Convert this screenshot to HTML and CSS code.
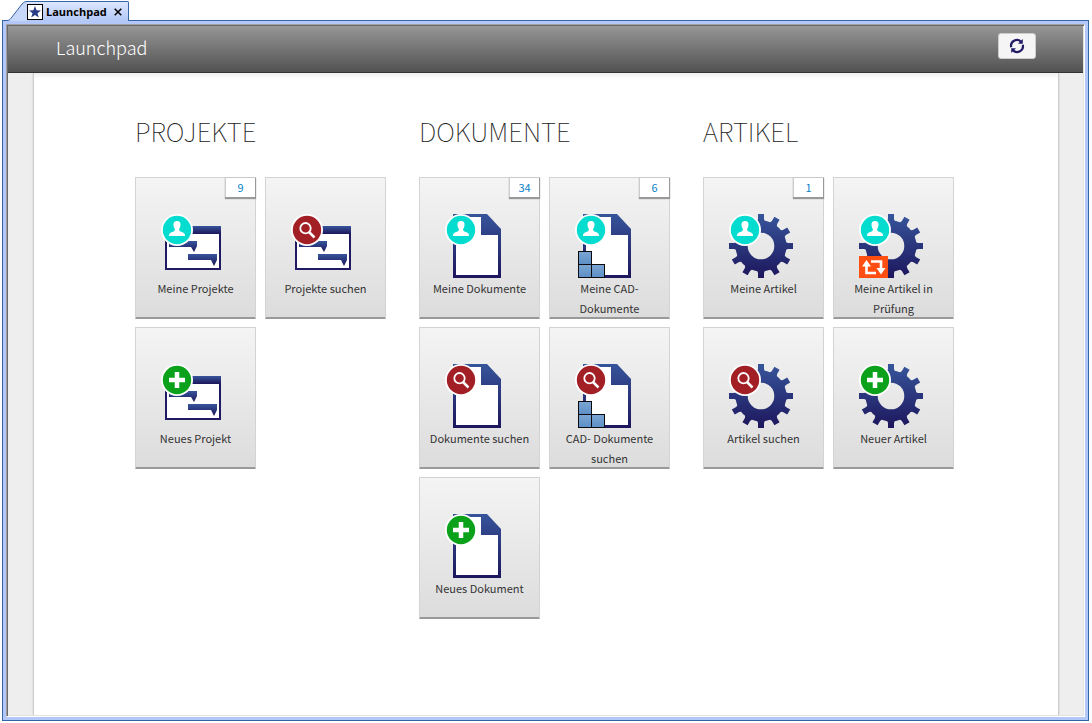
FILE: index.html
```html
<!DOCTYPE html>
<html lang="de">
<head>
<meta charset="utf-8">
<title>Launchpad</title>
<link rel="stylesheet" href="styles.css">
</head>
<body>
<svg class="sprite" aria-hidden="true">
  <defs>
    <linearGradient id="navy" gradientUnits="userSpaceOnUse" x1="0" y1="0" x2="0" y2="64">
      <stop offset="0" stop-color="#37559b"/><stop offset="1" stop-color="#1d165c"/>
    </linearGradient>
    <linearGradient id="bar" x1="0" y1="0" x2="0" y2="1">
      <stop offset="0" stop-color="#37559b"/><stop offset="1" stop-color="#1d165c"/>
    </linearGradient>
    <linearGradient id="block" x1="0" y1="0" x2="0" y2="1">
      <stop offset="0" stop-color="#7ba6d3"/><stop offset="1" stop-color="#5d8fc6"/>
    </linearGradient>
    <g id="window">
      <rect x="4" y="12" width="56" height="44" fill="#1f1a62"/>
      <rect x="6" y="20" width="52" height="34" fill="#fff"/>
      <rect x="4" y="12" width="56" height="8" fill="url(#bar)"/>
      <path d="M8 27H36V32L33 38L30 33H8Z" fill="url(#bar)"/>
      <path d="M27 40H56V46L53 52L50 46H27Z" fill="url(#bar)"/>
    </g>
    <g id="doc">
      <path d="M8 0H42L56 15V64H8Z" fill="url(#navy)"/>
      <path d="M11 3H36V21H53V61H11Z" fill="#fff"/>
    </g>
    <g id="blocks" fill="url(#block)" stroke="#0b0b0f">
      <rect x="4.500" y="37.500" width="13" height="13"/>
      <rect x="4.500" y="50.500" width="13" height="13"/>
      <rect x="17.500" y="50.500" width="13" height="13"/>
    </g>
    <path id="tooth" d="M27 10L29 5V0H35V5L37 10Z"/>
    <g id="gear">
      <mask id="gearmask" maskUnits="userSpaceOnUse" x="0" y="0" width="64" height="64">
        <g fill="#fff">
          <circle cx="32" cy="32" r="25.500"/>
          <use href="#tooth"/><use href="#tooth" transform="rotate(30 32 32)"/>
          <use href="#tooth" transform="rotate(60 32 32)"/><use href="#tooth" transform="rotate(90 32 32)"/>
          <use href="#tooth" transform="rotate(120 32 32)"/><use href="#tooth" transform="rotate(150 32 32)"/>
          <use href="#tooth" transform="rotate(180 32 32)"/><use href="#tooth" transform="rotate(210 32 32)"/>
          <use href="#tooth" transform="rotate(240 32 32)"/><use href="#tooth" transform="rotate(270 32 32)"/>
          <use href="#tooth" transform="rotate(300 32 32)"/><use href="#tooth" transform="rotate(330 32 32)"/>
        </g>
        <circle cx="32" cy="32" r="13.300" fill="#000"/>
      </mask>
      <rect width="64" height="64" fill="url(#navy)" mask="url(#gearmask)"/>
    </g>
    <g id="review">
      <rect x="0" y="42" width="29" height="22" fill="#ff4e12"/>
      <g fill="none" stroke="#fff" stroke-width="2.600">
        <path d="M7.500 50V59H17"/><path d="M12 47.500H22V56"/>
      </g>
      <path d="M3 52.500L7.500 46L12 52.500Z M17.500 54H26.500L22 60.500Z" fill="#fff"/>
    </g>
    <g id="mine">
      <circle cx="16" cy="16" r="16" fill="#fff"/><circle cx="16" cy="16" r="14.200" fill="#04dccf"/>
      <path d="M16 7C18.500 7 19.700 8.500 19.500 11C19.400 13 18.700 14 18.200 15C18 16.500 18.300 17 19.500 17.400C22.500 18.200 24 19 24 21.500V22H8V21.500C8 19 9.500 18.200 12.500 17.400C13.700 17 14 16.500 13.800 15C13.300 14 12.600 13 12.500 11C12.300 8.500 13.500 7 16 7Z" fill="#fff"/>
    </g>
    <g id="search">
      <circle cx="16" cy="16" r="16" fill="#fff"/><circle cx="16" cy="16" r="14.200" fill="#a31f26"/>
      <circle cx="14.500" cy="14.200" r="5.200" fill="none" stroke="#fff" stroke-width="1.800"/>
      <path d="M18 18L23.500 23.500" stroke="#fff" stroke-width="2.500"/>
    </g>
    <g id="new">
      <circle cx="16" cy="16" r="16" fill="#fff"/><circle cx="16" cy="16" r="14.200" fill="#0ba11b"/>
      <path d="M16 8V24M8 16H24" stroke="#fff" stroke-width="4.500"/>
    </g>
  </defs>
</svg>

<div class="tabs">
  <svg class="tab-slope" viewBox="0 0 20 20" aria-hidden="true">
    <path class="slope-fill" d="M0 20C3 19 3 18 5 16L15 3C17 1 18 .5 20 .5V20Z"/>
    <path class="slope-line" d="M0 19.500C3 19.500 3 18 5 16L15 3C17 1 18 .5 20 .5"/>
  </svg>
  <div class="tab">
    <svg class="tab-icon" viewBox="0 0 16 16" aria-hidden="true">
      <rect x=".5" y=".5" width="15" height="15" fill="#fff" stroke="#000"/>
      <path d="M8 2L9.600 6.300L14 6.500L10.500 9.200L11.800 13.600L8 11L4.200 13.600L5.500 9.200L2 6.500L6.400 6.300Z" fill="#2b3c86"/>
    </svg>
    <span>Launchpad</span>
    <button class="tab-close" type="button" aria-label="Schließen">
      <svg viewBox="0 0 8 8"><path d="M.7 .7L7.300 7.300M7.300 .7L.7 7.300" stroke="#000" stroke-width="1.500"/></svg>
    </button>
  </div>
</div>

<div class="frame">
  <div class="view">
    <header class="header">
      <h1>Launchpad</h1>
      <button class="refresh" type="button" aria-label="Aktualisieren">
        <svg viewBox="0 0 16 16">
          <path d="M2.200 9.200A5.900 5.900 0 0 1 12 3.600M13.800 6.800A5.900 5.900 0 0 1 4 12.400" fill="none" stroke="#221b66" stroke-width="2.200"/>
          <path d="M13.800 1V5.800H9Z M2.200 15V10.200H7Z" fill="#221b66"/>
        </svg>
      </button>
    </header>
    <main class="sheet">
      <section class="group">
        <h2>PROJEKTE</h2>
        <div class="tiles">
          <button class="tile" type="button"><span class="count">9</span><svg class="icon" viewBox="0 0 69 64"><use href="#window"/><use href="#mine"/></svg><span class="label">Meine Projekte</span></button>
          <button class="tile" type="button"><svg class="icon" viewBox="0 0 69 64"><use href="#window"/><use href="#search"/></svg><span class="label">Projekte suchen</span></button>
          <button class="tile" type="button"><svg class="icon" viewBox="0 0 69 64"><use href="#window"/><use href="#new"/></svg><span class="label">Neues Projekt</span></button>
        </div>
      </section>
      <section class="group">
        <h2>DOKUMENTE</h2>
        <div class="tiles">
          <button class="tile" type="button"><span class="count">34</span><svg class="icon" viewBox="0 0 69 64"><use href="#doc"/><use href="#mine"/></svg><span class="label">Meine Dokumente</span></button>
          <button class="tile" type="button"><span class="count">6</span><svg class="icon" viewBox="0 0 69 64"><use href="#doc"/><use href="#mine"/><use href="#blocks" x="-1"/></svg><span class="label">Meine CAD-<br>Dokumente</span></button>
          <button class="tile" type="button"><svg class="icon" viewBox="0 0 69 64"><use href="#doc"/><use href="#search"/></svg><span class="label">Dokumente suchen</span></button>
          <button class="tile" type="button"><svg class="icon" viewBox="0 0 69 64"><use href="#doc"/><use href="#search"/><use href="#blocks" x="-1"/></svg><span class="label">CAD- Dokumente<br>suchen</span></button>
          <button class="tile" type="button"><svg class="icon" viewBox="0 0 69 64"><use href="#doc"/><use href="#new"/></svg><span class="label">Neues Dokument</span></button>
        </div>
      </section>
      <section class="group">
        <h2>ARTIKEL</h2>
        <div class="tiles">
          <button class="tile" type="button"><span class="count">1</span><svg class="icon" viewBox="0 0 69 64"><use href="#gear"/><use href="#mine"/></svg><span class="label">Meine Artikel</span></button>
          <button class="tile" type="button"><svg class="icon" viewBox="0 0 69 64"><use href="#gear"/><use href="#mine"/><use href="#review"/></svg><span class="label">Meine Artikel in<br>Prüfung</span></button>
          <button class="tile" type="button"><svg class="icon" viewBox="0 0 69 64"><use href="#gear"/><use href="#search"/></svg><span class="label">Artikel suchen</span></button>
          <button class="tile" type="button"><svg class="icon" viewBox="0 0 69 64"><use href="#gear"/><use href="#new"/></svg><span class="label">Neuer Artikel</span></button>
        </div>
      </section>
    </main>
  </div>
</div>
</body>
</html>
```
FILE: styles.css
```css
* { box-sizing: border-box; }
body {
  margin: 0;
  min-height: 100vh;
  padding: 1px 3px 2px 2px;
  display: flex;
  flex-direction: column;
  background: #fff;
  font-family: "Noto Sans CJK SC", "Open Sans", sans-serif;
}
button { font: inherit; color: inherit; padding: 0; cursor: pointer; }
svg { display: block; }
.sprite { position: absolute; width: 0; height: 0; }

.tabs { display: flex; height: 20px; padding-left: 5px; position: relative; z-index: 1; }
.tab-slope { width: 20px; height: 20px; }
.slope-fill { fill: #c8d8fb; }
.slope-line { fill: none; stroke: #3565a5; }
.tab {
  display: flex;
  align-items: center;
  gap: 3px;
  padding-right: 6px;
  border: solid #3565a5;
  border-width: 1px 1px 0 0;
  border-radius: 0 2px 0 0;
  background: linear-gradient(#dde7fd, #b3c8f8);
  font: bold 11px/16px "Open Sans", sans-serif;
  color: #000;
}
.tab-icon { width: 16px; height: 16px; }
.tab-close { width: 8px; height: 8px; margin-left: 4px; border: 0; background: none; }
.tab-close svg { width: 8px; height: 8px; }

.frame {
  flex: 1;
  display: flex;
  margin-top: -1px;
  padding: 3px;
  border: 1px solid #3565a5;
  background: #b3c8f8;
}
.view {
  flex: 1;
  display: flex;
  flex-direction: column;
  border: 1px solid;
  border-color: #a0a0a0 #fff #fff #a0a0a0;
  box-shadow: inset 1px 1px #696969, inset -1px -1px #e3e3e3;
  padding: 1px;
  background: #eee;
}
.header {
  display: flex;
  align-items: center;
  justify-content: space-between;
  height: 47px;
  padding: 0 47px 4px 48px;
  border-bottom: 1px solid #333;
  background: linear-gradient(#969696, #525252);
}
.header h1 { margin: 0; font-size: 18px; font-weight: 300; line-height: 24px; color: #fff; }
.refresh {
  display: flex;
  align-items: center;
  justify-content: center;
  width: 38px;
  height: 26px;
  margin-bottom: 2px;
  border: 1px solid #ccc;
  border-radius: 3px;
  background: #f5f5f5;
}
.refresh svg { width: 16px; height: 16px; }
.sheet {
  flex: 1;
  display: flex;
  flex-wrap: wrap;
  align-content: flex-start;
  gap: 33px;
  margin: 0 24px 0 25px;
  padding: 38px 101px;
  border: solid #ccc;
  border-width: 0 1px;
  background: linear-gradient(#f0f0f0, #fff 6px);
  box-shadow: 0 0 2px #ccc;
  clip-path: inset(0 -3px);
}
.group { width: 251px; }
.group h2 { margin: 0 0 26px; font-size: 26px; font-weight: 100; line-height: 40px; color: #222; }
.tiles { display: grid; grid-template-columns: repeat(2, 121px); gap: 8px 9px; }
.tile {
  position: relative;
  display: flex;
  flex-direction: column;
  align-items: center;
  justify-content: flex-start;
  min-height: 142px;
  padding-top: 36px;
  border: 1px solid #d3d3d3;
  border-bottom-color: #999;
  background: linear-gradient(#f4f4f4, #dcdcdc);
  box-shadow: inset 0 -1px #999;
}
.icon { width: 69px; height: 64px; }
.label { font-size: 11px; line-height: 20px; color: #333; white-space: nowrap; }
.count {
  position: absolute;
  top: 0;
  right: 0;
  width: 29px;
  height: 19px;
  background: #fff;
  box-shadow: -1px 0 #ccc, 0 1px 1px 1px #999;
  font-size: 11px;
  line-height: 19px;
  color: #0a82c8;
}
```
